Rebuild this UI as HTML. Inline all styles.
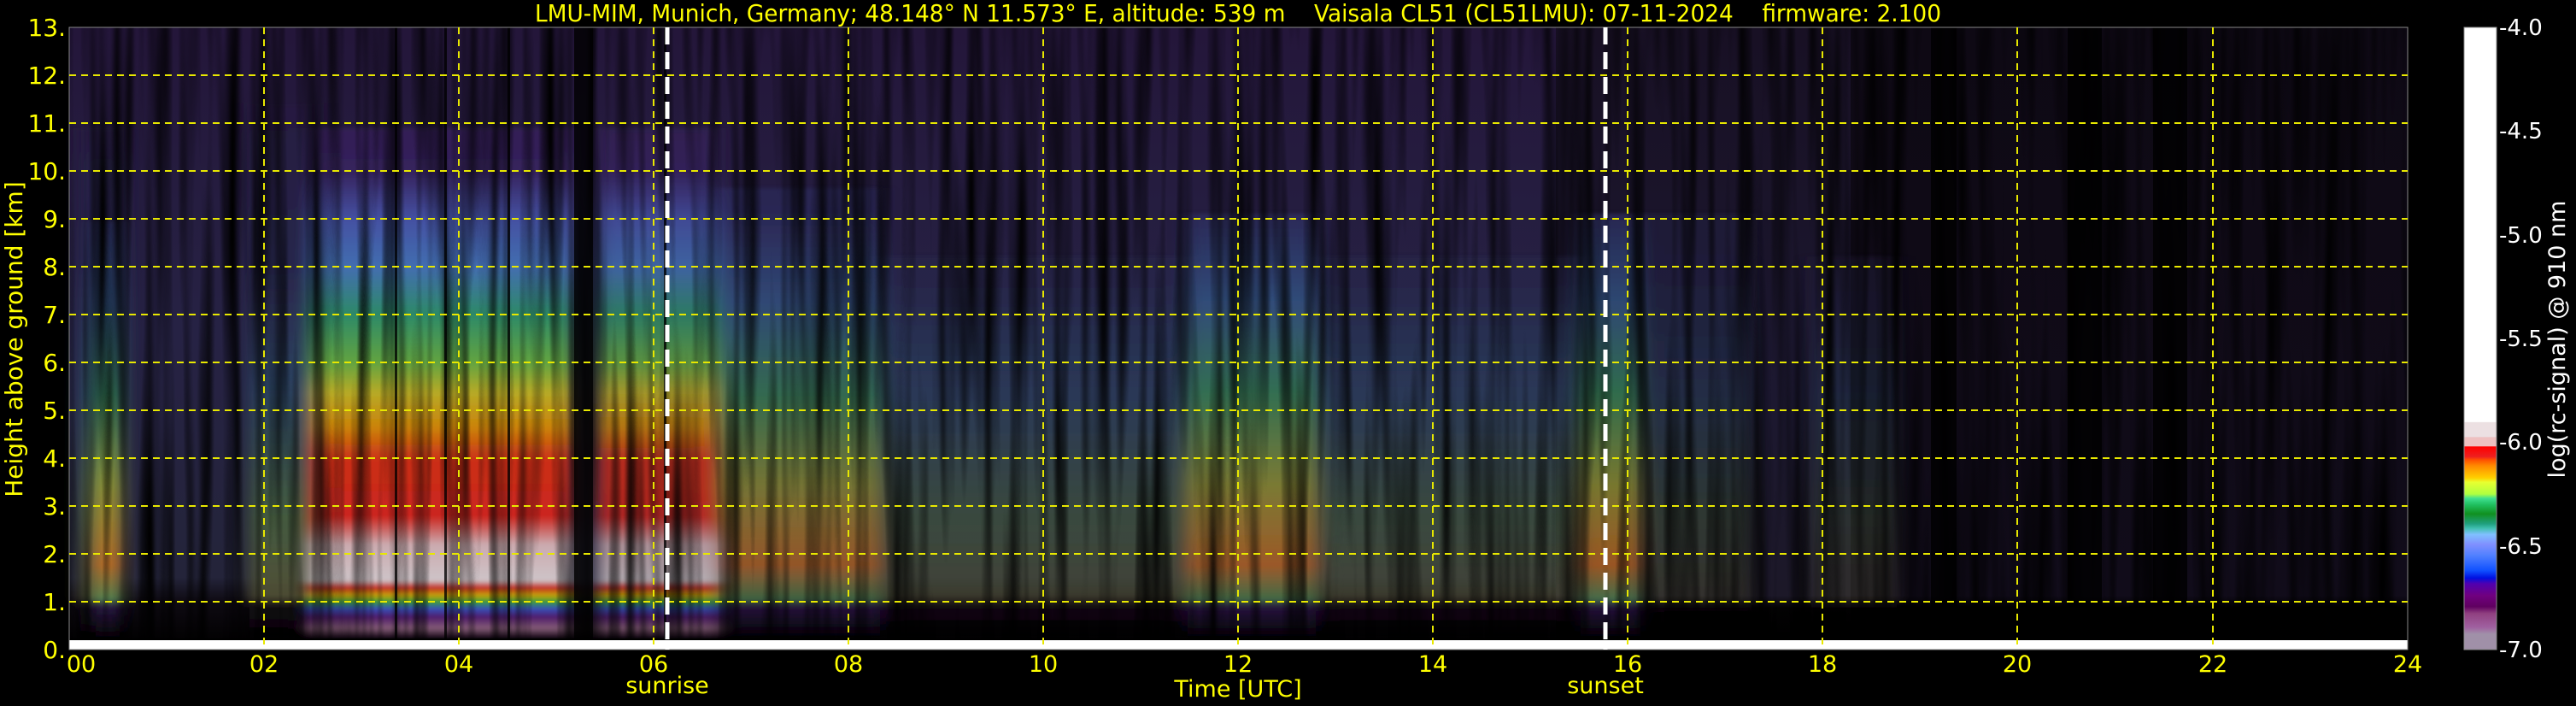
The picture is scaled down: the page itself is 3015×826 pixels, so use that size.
<!DOCTYPE html>
<html><head><meta charset="utf-8"><style>
html,body{margin:0;padding:0;background:#000;width:3015px;height:826px;overflow:hidden}
svg{display:block}
text{font-family:"DejaVu Sans","Liberation Sans",sans-serif}
</style></head><body>
<svg width="3015" height="826" viewBox="0 0 3015 826" xmlns="http://www.w3.org/2000/svg">
<defs>
<linearGradient id="bg" gradientUnits="userSpaceOnUse" x1="0" y1="32" x2="0" y2="747">
<stop offset="0" stop-color="#24163a"/><stop offset="0.5" stop-color="#262244"/><stop offset="0.9" stop-color="#24243a"/><stop offset="0.94" stop-color="#0e0a12"/><stop offset="1" stop-color="#030203"/></linearGradient>
<linearGradient id="bg2" gradientUnits="userSpaceOnUse" x1="0" y1="32" x2="0" y2="747">
<stop offset="0" stop-color="#181024"/><stop offset="0.6" stop-color="#1c1830"/><stop offset="0.93" stop-color="#1c1828"/><stop offset="0.95" stop-color="#030203"/><stop offset="1" stop-color="#000"/></linearGradient>
<linearGradient id="bg3" gradientUnits="userSpaceOnUse" x1="0" y1="32" x2="0" y2="747">
<stop offset="0" stop-color="#0e0914"/><stop offset="0.93" stop-color="#110c1a"/><stop offset="0.95" stop-color="#000"/><stop offset="1" stop-color="#000"/></linearGradient>
<linearGradient id="strong" gradientUnits="userSpaceOnUse" x1="0" y1="32" x2="0" y2="747">
<stop offset="0" stop-color="#2a1840"/><stop offset="0.235" stop-color="#3a2464"/><stop offset="0.313" stop-color="#4c5cb8"/><stop offset="0.392" stop-color="#4a80c8"/><stop offset="0.47" stop-color="#30a070"/><stop offset="0.548" stop-color="#70c040"/><stop offset="0.598" stop-color="#d8c820"/><stop offset="0.655" stop-color="#f09800"/><stop offset="0.71" stop-color="#f03010"/><stop offset="0.8" stop-color="#f02818"/><stop offset="0.846" stop-color="#f0c8c8"/><stop offset="0.905" stop-color="#f4e8e8"/><stop offset="0.917" stop-color="#e83020"/><stop offset="0.929" stop-color="#f0c000"/><stop offset="0.94" stop-color="#40c040"/><stop offset="0.951" stop-color="#4060e0"/><stop offset="0.965" stop-color="#602080"/><stop offset="0.983" stop-color="#a07090"/><stop offset="1" stop-color="#100010"/></linearGradient>
<linearGradient id="med" gradientUnits="userSpaceOnUse" x1="0" y1="32" x2="0" y2="747">
<stop offset="0" stop-color="#24163a"/><stop offset="0.3" stop-color="#2c2c60"/><stop offset="0.45" stop-color="#365e90"/><stop offset="0.6" stop-color="#3a9058"/><stop offset="0.75" stop-color="#a0a030"/><stop offset="0.88" stop-color="#d07020"/><stop offset="0.935" stop-color="#589058"/><stop offset="0.95" stop-color="#301850"/><stop offset="1" stop-color="#030203"/></linearGradient>
<linearGradient id="weak" gradientUnits="userSpaceOnUse" x1="0" y1="32" x2="0" y2="747">
<stop offset="0" stop-color="#24163a"/><stop offset="0.4" stop-color="#28284e"/><stop offset="0.6" stop-color="#2e4c68"/><stop offset="0.8" stop-color="#4c6840"/><stop offset="0.93" stop-color="#5a5a38"/><stop offset="0.95" stop-color="#120c12"/><stop offset="1" stop-color="#030203"/></linearGradient>
<linearGradient id="cb" gradientUnits="userSpaceOnUse" x1="0" y1="32" x2="0" y2="760">
<stop offset="0" stop-color="#fff"/><stop offset="0.634" stop-color="#fff"/><stop offset="0.635" stop-color="#ece0e2"/><stop offset="0.658" stop-color="#ece0e2"/><stop offset="0.659" stop-color="#eec0c0"/><stop offset="0.673" stop-color="#eec0c0"/><stop offset="0.674" stop-color="#ff0000"/><stop offset="0.69" stop-color="#ee2020"/><stop offset="0.695" stop-color="#ff5000"/><stop offset="0.705" stop-color="#ff8c00"/><stop offset="0.724" stop-color="#ffd000"/><stop offset="0.731" stop-color="#e8ff30"/><stop offset="0.75" stop-color="#b0ff40"/><stop offset="0.757" stop-color="#40e090"/><stop offset="0.767" stop-color="#20c060"/><stop offset="0.782" stop-color="#109020"/><stop offset="0.798" stop-color="#20a080"/><stop offset="0.805" stop-color="#40c0b0"/><stop offset="0.815" stop-color="#80c0ff"/><stop offset="0.831" stop-color="#8090ff"/><stop offset="0.849" stop-color="#5080ff"/><stop offset="0.873" stop-color="#1050ff"/><stop offset="0.885" stop-color="#0010e0"/><stop offset="0.894" stop-color="#5000b0"/><stop offset="0.913" stop-color="#700080"/><stop offset="0.931" stop-color="#600060"/><stop offset="0.942" stop-color="#904080"/><stop offset="0.964" stop-color="#a060a0"/><stop offset="0.975" stop-color="#a090a8"/><stop offset="1" stop-color="#a090a8"/></linearGradient>
<filter id="bl" x="-5%" y="0" width="110%" height="100%"><feGaussianBlur stdDeviation="10 2"/></filter>
<filter id="streaks" x="0" y="0" width="100%" height="100%">
<feTurbulence type="fractalNoise" baseFrequency="0.06 0.002" numOctaves="2" seed="7"/>
<feColorMatrix type="matrix" values="0 0 0 0 0  0 0 0 0 0  0 0 0 0 0  2.2 0 0 0 -0.9"/>
</filter>
</defs>

<rect x="81" y="32" width="1740" height="715" fill="url(#bg)"/>
<rect x="1821" y="32" width="345" height="715" fill="url(#bg2)"/>
<rect x="2166" y="32" width="652" height="715" fill="url(#bg3)"/>
<g filter="url(#bl)">
<rect x="95" y="150" width="50" height="597" fill="url(#weak)"/>
<rect x="112" y="260" width="28" height="487" fill="url(#med)" opacity="0.85"/>
<rect x="292" y="120" width="80" height="627" fill="url(#weak)" opacity="0.8"/>
<rect x="365" y="150" width="305" height="597" fill="url(#strong)" opacity="0.82"/>
<rect x="700" y="150" width="140" height="597" fill="url(#strong)" opacity="0.7"/>
<rect x="840" y="220" width="190" height="527" fill="url(#med)" opacity="0.65"/>
<rect x="1030" y="300" width="360" height="447" fill="url(#weak)" opacity="0.55"/>
<rect x="1390" y="250" width="150" height="497" fill="url(#med)" opacity="0.7"/>
<rect x="1540" y="300" width="310" height="447" fill="url(#weak)" opacity="0.55"/>
<rect x="1850" y="250" width="70" height="497" fill="url(#med)" opacity="0.7"/>
<rect x="1920" y="250" width="130" height="497" fill="url(#weak)" opacity="0.4"/>
<rect x="2120" y="300" width="100" height="447" fill="url(#weak)" opacity="0.3"/>
</g>
<rect x="81" y="32" width="2737" height="715" filter="url(#streaks)"/>
<g fill="#000" opacity="0.8">
<rect x="462" y="32" width="3" height="715"/><rect x="520" y="32" width="3" height="715"/><rect x="594" y="32" width="3" height="715"/><rect x="672" y="32" width="22" height="715"/><rect x="777" y="32" width="3" height="715"/>
<rect x="2260" y="32" width="30" height="715"/><rect x="2420" y="32" width="40" height="715"/><rect x="2520" y="32" width="40" height="715"/>
</g>
<rect x="81" y="749" width="2737" height="11" fill="#fff"/>
<rect x="81" y="32" width="2737" height="728" fill="none" stroke="#888" stroke-width="1"/>

<g stroke="#e8e800" stroke-width="2" stroke-dasharray="8 6" fill="none">
<path d="M81 704H2818M81 648H2818M81 592H2818M81 536H2818M81 480H2818M81 424H2818M81 368H2818M81 312H2818M81 256H2818M81 200H2818M81 144H2818M81 88H2818"/>
<path d="M309 32V760M537 32V760M765 32V760M993 32V760M1221 32V760M1449 32V760M1677 32V760M1905 32V760M2133 32V760M2361 32V760M2590 32V760"/>
</g>
<g stroke="#fff" stroke-width="5" stroke-dasharray="20 9">
<path d="M781 32V760M1879 32V760"/>
</g>

<text x="626" y="25" font-size="28" fill="#ffff00" textLength="1646" lengthAdjust="spacingAndGlyphs" xml:space="preserve">LMU-MIM, Munich, Germany; 48.148° N 11.573° E, altitude: 539 m    Vaisala CL51 (CL51LMU): 07-11-2024    firmware: 2.100</text>

<g font-size="28" fill="#ffff00" text-anchor="end">
<text x="77" y="770">0.</text><text x="77" y="714">1.</text><text x="77" y="658">2.</text><text x="77" y="602">3.</text><text x="77" y="546">4.</text><text x="77" y="490">5.</text><text x="77" y="434">6.</text><text x="77" y="378">7.</text><text x="77" y="322">8.</text><text x="77" y="266">9.</text><text x="77" y="210">10.</text><text x="77" y="154">11.</text><text x="77" y="98">12.</text><text x="77" y="42">13.</text>
</g>
<text transform="translate(26,397) rotate(-90)" font-size="28" fill="#ffff00" text-anchor="middle">Height above ground [km]</text>

<g font-size="27" fill="#ffff00" text-anchor="middle">
<text x="95" y="786">00</text><text x="309" y="786">02</text><text x="537" y="786">04</text><text x="765" y="786">06</text><text x="993" y="786">08</text><text x="1221" y="786">10</text><text x="1449" y="786">12</text><text x="1677" y="786">14</text><text x="1905" y="786">16</text><text x="2133" y="786">18</text><text x="2361" y="786">20</text><text x="2590" y="786">22</text><text x="2818" y="786">24</text>
<text x="781" y="811">sunrise</text><text x="1879" y="811">sunset</text>
<text x="1449" y="815">Time [UTC]</text>
</g>

<rect x="2884" y="32" width="38" height="728" fill="url(#cb)"/>
<rect x="2884" y="32" width="38" height="728" fill="none" stroke="#888" stroke-width="1"/>
<g font-size="26" fill="#fff">
<text x="2925" y="41">-4.0</text><text x="2925" y="162">-4.5</text><text x="2925" y="284">-5.0</text><text x="2925" y="405">-5.5</text><text x="2925" y="526">-6.0</text><text x="2925" y="648">-6.5</text><text x="2925" y="769">-7.0</text>
</g>
<text transform="translate(3002,397) rotate(-90)" font-size="27" fill="#fff" text-anchor="middle">log(rc-signal) @ 910 nm</text>
</svg>
</body></html>
